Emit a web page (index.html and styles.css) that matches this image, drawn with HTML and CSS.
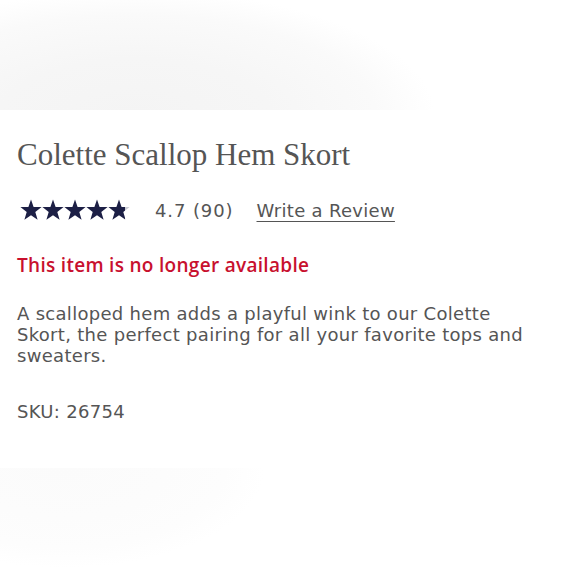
FILE: index.html
```html
<!DOCTYPE html>
<html>
<head>
<meta charset="utf-8">
<link rel="stylesheet" href="styles.css">
</head>
<body>
<div class="page">
  <div class="top-fade"></div>
  <section class="product">
    <h1 class="title">Colette Scallop Hem Skort</h1>
    <div class="rating">
      <div class="stars">
        <svg width="112" height="22" viewBox="0 0 112 22">
          <defs>
            <path id="st" d="M11 0.5 L13.6 8 L21.6 8.1 L15.3 13 L17.6 20.8 L11 16.2 L4.4 20.8 L6.7 13 L0.4 8.1 L8.4 8 Z"/>
            <linearGradient id="part" x1="0" x2="1" y1="0" y2="0">
              <stop offset="0.8" stop-color="#1c1f45"/>
              <stop offset="0.8" stop-color="#c9cad3"/>
            </linearGradient>
          </defs>
          <use href="#st" x="0" fill="#1c1f45"/>
          <use href="#st" x="22" fill="#1c1f45"/>
          <use href="#st" x="44" fill="#1c1f45"/>
          <use href="#st" x="66" fill="#1c1f45"/>
          <use href="#st" x="88" fill="url(#part)"/>
        </svg>
      </div>
      <span class="score">4.7 (90)</span>
      <a class="review" href="#">Write a Review</a>
    </div>
    <p class="unavailable">This item is no longer available</p>
    <p class="desc">A scalloped hem adds a playful wink to our Colette Skort, the perfect pairing for all your favorite tops and sweaters.</p>
    <p class="sku">SKU: 26754</p>
  </section>
  <div class="bottom-fade"></div>
</div>
</body>
</html>
```

FILE: styles.css
```css
html, body {
  margin: 0;
  padding: 0;
  background: #fff;
}
.page {
  width: 580px;
  height: 580px;
  overflow: hidden;
  display: flex;
  flex-direction: column;
}
.top-fade {
  height: 110px;
  flex: none;
  background: radial-gradient(ellipse 300px 125px at 135px 115px, #f4f4f4 0%, #f6f6f6 45%, #fafafa 80%, #ffffff 100%);
}
.product {
  flex: none;
  height: 358px;
  padding: 0 44px 0 17px;
  box-sizing: border-box;
  font-family: "DejaVu Sans", "Liberation Sans", sans-serif;
  color: #555;
}
.title {
  margin: 27px 0 0;
  font-family: "Liberation Serif", serif;
  font-weight: normal;
  font-size: 31px;
  line-height: 36px;
  color: #555;
}
.rating {
  display: flex;
  align-items: center;
  margin-top: 24px;
  height: 26px;
  font-size: 18px;
}
.stars {
  display: flex;
  margin-left: 3px;
  width: 135px;
}
.stars svg { display: block; }
.score {
  margin-right: 23px;
  letter-spacing: 0.9px;
}
.review {
  color: #555;
  letter-spacing: 0.3px;
  text-decoration: underline;
  text-underline-offset: 4px;
  text-decoration-thickness: 1px;
}
.unavailable {
  margin: 30px 0 0;
  font-family: "Open Sans", "DejaVu Sans", sans-serif;
  font-size: 19px;
  line-height: 24px;
  font-weight: 600;
  letter-spacing: 0.3px;
  color: #c8102e;
}
.desc {
  margin: 26px 0 0;
  font-size: 18px;
  line-height: 21px;
  letter-spacing: 0.3px;
  color: #555;
}
.sku {
  margin: 35px 0 0;
  font-size: 18px;
  line-height: 21px;
  letter-spacing: 0.3px;
  color: #555;
}
.bottom-fade {
  flex: 1;
  background: radial-gradient(ellipse 200px 100px at 65px 0px, #fbfbfb 0%, #fcfcfc 50%, #fdfdfd 80%, #ffffff 100%);
}
```
